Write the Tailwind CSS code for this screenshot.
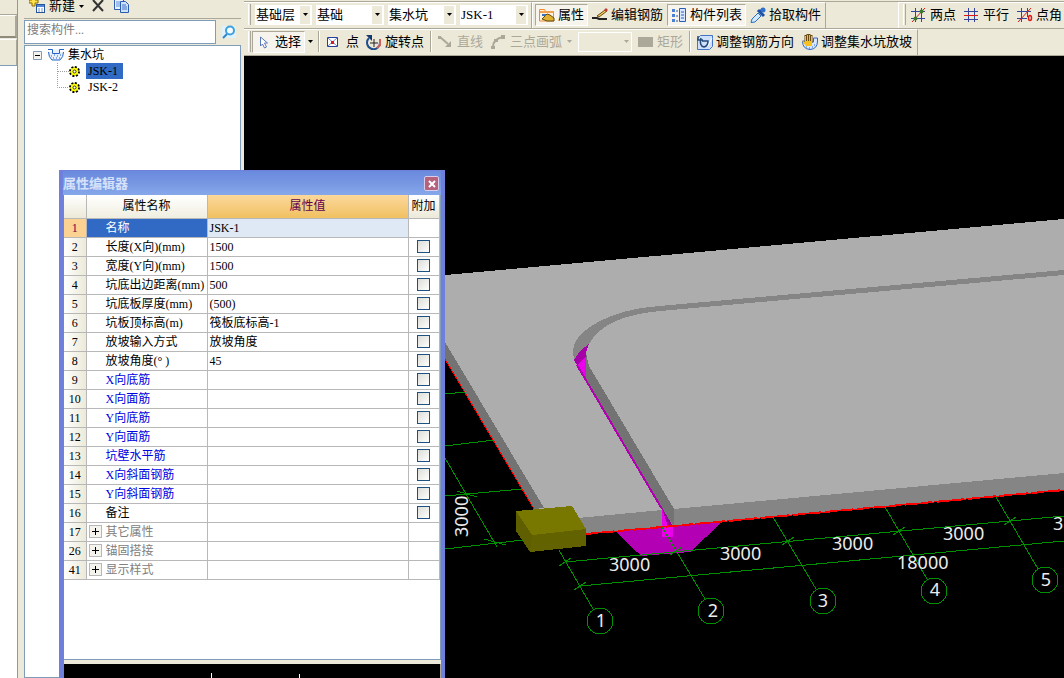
<!DOCTYPE html>
<html lang="zh-CN">
  <head>
    <meta charset="UTF-8" />
    <meta name="viewport" content="width=device-width, initial-scale=1.0" />
    <script src="https://cdn.jsdelivr.net/npm/@tailwindcss/browser@4"></script>
    <title>属性编辑器</title>
  </head>
  <body class="relative flex h-screen overflow-hidden bg-[#ece9d8] font-['Liberation_Serif','Noto_Sans_CJK_SC',serif] text-xs text-black">
    <!-- Edge of the navigation pane -->
    <div class="flex w-[18px] shrink-0 flex-col border-r border-[#7f9db9]">
      <div class="h-[15px] border-b border-[#aca899]"></div>
      <div class="h-[23px] border-t border-r-2 border-b-2 border-t-white border-r-[#aca899] border-b-[#8f8c7e]"></div>
      <div class="mt-px h-[26px] border-t border-r border-t-white border-r-[#aca899]"></div>
      <div class="flex-1 border-t border-[#7f9db9] bg-white"></div>
    </div>

    <!-- Component tree -->
    <aside class="ml-1.5 flex w-[217px] shrink-0 flex-col">
      <div class="flex h-[19px] items-start border-b border-[#aca899] pl-[5px] text-[13px]">
        <button class="flex h-3 items-center gap-1 leading-3">
          <svg class="h-4 w-4" viewBox="0 0 16 16"><path d="M0 2h3V-1h3v3h3v3H6v3H3V5H0z" fill="#ffe14a" stroke="#8a6a00"/><rect x="7.500" y="6.500" width="8" height="8" fill="#fff" stroke="#28549c"/><path d="M8 7h7v2H8z" fill="#4f86dd"/><path d="M9 11h2m1 0h2M9 13h2m1 0h2" stroke="#6a93d6"/></svg>
          <span>新建</span>
          <svg class="h-[3px] w-[5px]" viewBox="0 0 5 3"><path d="M0 0h5L2.500 3z"/></svg>
        </button>
        <button class="ml-2 h-3" aria-label="删除"><svg class="h-3 w-3" viewBox="0 0 12 12"><path d="M1 0l10 11M11 0L1 11" stroke="#333" stroke-width="2"/></svg></button>
        <button class="ml-2.5 h-3" aria-label="复制"><svg class="h-3.5 w-4" viewBox="0 0 16 14"><path d="M.5-2.500h7l2 2v10h-9z" fill="#e8f1ff" stroke="#2c5db0"/><path d="M2 2h4M2 4h4M2 6h4" stroke="#5c8bd8"/><path d="M6.500 1.500h5l3 3v8h-8z" fill="#cfe1fb" stroke="#2c5db0"/><path d="M8 5h4M8 7h5M8 9h5" stroke="#3f73c6"/></svg></button>
      </div>
      <div class="mt-px flex h-6 items-center">
        <input type="text" aria-label="搜索构件" placeholder="搜索构件..." class="h-6 w-[192px] border border-[#7f9db9] bg-white px-0.5 pb-1 placeholder:text-[#7d7d7d] outline-none" />
        <button class="flex flex-1 justify-center" aria-label="搜索"><svg class="h-3.5 w-3.5" viewBox="0 0 14 14"><path d="M0 1h14v12H0z" fill="#dff1fb"/><circle cx="8" cy="5.500" r="4" fill="#f4fcff" stroke="#3fa0dc" stroke-width="2"/><path d="M5 9l-4 4" stroke="#2f86c8" stroke-width="2"/></svg></button>
      </div>
      <div class="mt-px flex-1 border border-[#7f9db9] bg-white pt-px pl-2">
        <div class="flex h-4 items-center">
          <svg class="h-[9px] w-[9px]" viewBox="0 0 9 9"><path d="M.5.5h8v8h-8z" fill="#f5f3ee" stroke="#7f9db9"/><path d="M2 4.500h5" stroke="#000"/></svg>
          <svg class="ml-1.5 h-4 w-4" viewBox="0 0 16 14"><path d="M0 1.500h4.500v4h7v-4H16M.5 4q0 5 3.500 8h8q3.500-3 3.500-8" fill="#e6effc" stroke="#2464c8"/><path d="M3 8h1m2-1h1m2 1h1m2-1h1M5 10h1m2 0h1m2 0h1" stroke="#2464c8"/></svg>
          <span class="ml-1">集水坑</span>
        </div>
        <ul class="ml-6 leading-4">
          <li class="flex items-center">
            <svg class="h-4 w-3" viewBox="0 0 12 16"><path d="M.5 0v16M1 8.500h11" fill="none" stroke="#a0a0a0" stroke-dasharray="1 1"/></svg>
            <svg class="h-[11px] w-[11px]" viewBox="0 0 11 11"><circle cx="5.500" cy="5.500" r="4.500" fill="#ff0" stroke="#000" stroke-width="2" stroke-dasharray="2 1.500"/><circle cx="5.500" cy="5.500" r="3.500" fill="#ff0"/><circle cx="5.500" cy="5.500" r="1.500" fill="#fff" stroke="#333"/></svg>
            <a href="#" class="ml-1.5 bg-[#316ac5] pr-[5px] pl-0.5">JSK-1</a>
          </li>
          <li class="flex items-center">
            <svg class="h-4 w-3" viewBox="0 0 12 16"><path d="M.5 0v8.500H12" fill="none" stroke="#a0a0a0" stroke-dasharray="1 1"/></svg>
            <svg class="h-[11px] w-[11px]" viewBox="0 0 11 11"><circle cx="5.500" cy="5.500" r="4.500" fill="#ff0" stroke="#000" stroke-width="2" stroke-dasharray="2 1.500"/><circle cx="5.500" cy="5.500" r="3.500" fill="#ff0"/><circle cx="5.500" cy="5.500" r="1.500" fill="#fff" stroke="#333"/></svg>
            <a href="#" class="ml-1.5 pr-[5px] pl-0.5">JSK-2</a>
          </li>
        </ul>
      </div>
    </aside>

    <main class="ml-[3px] flex min-w-0 flex-1 flex-col overflow-hidden text-[13px] whitespace-nowrap">
      <!-- Toolbar 1 -->
      <div class="mt-px flex h-7 shrink-0 items-stretch border-t border-b border-t-[#aca899] border-b-[#aca899]">
        <div class="flex shrink-0 items-center gap-1 border-t border-r border-t-white border-r-[#aca899] pr-[3px] pb-0.5">
          <div class="ml-1 h-[21px] w-[3px] border-r border-l border-r-[#aca899] border-l-white"></div>
          <div class="relative h-5 w-[57px]">
            <select aria-label="楼层" class="h-5 w-full appearance-none bg-white pl-px outline-none"><option>基础层</option></select>
            <span class="pointer-events-none absolute top-px right-0.5 flex h-[18px] w-2.5 items-center justify-center bg-[#ece9d8]"><svg class="h-[3px] w-[5px]" viewBox="0 0 5 3"><path d="M0 0h5L2.500 3z"/></svg></span>
          </div>
          <div class="relative h-5 w-[68px]">
            <select aria-label="类型" class="h-5 w-full appearance-none bg-white pl-px outline-none"><option>基础</option></select>
            <span class="pointer-events-none absolute top-px right-0.5 flex h-[18px] w-2.5 items-center justify-center bg-[#ece9d8]"><svg class="h-[3px] w-[5px]" viewBox="0 0 5 3"><path d="M0 0h5L2.500 3z"/></svg></span>
          </div>
          <div class="relative h-5 w-[68px]">
            <select aria-label="构件类型" class="h-5 w-full appearance-none bg-white pl-px outline-none"><option>集水坑</option></select>
            <span class="pointer-events-none absolute top-px right-0.5 flex h-[18px] w-2.5 items-center justify-center bg-[#ece9d8]"><svg class="h-[3px] w-[5px]" viewBox="0 0 5 3"><path d="M0 0h5L2.500 3z"/></svg></span>
          </div>
          <div class="relative h-5 w-[68px]">
            <select aria-label="构件" class="h-5 w-full appearance-none bg-white pl-px outline-none"><option>JSK-1</option></select>
            <span class="pointer-events-none absolute top-px right-0.5 flex h-[18px] w-2.5 items-center justify-center bg-[#ece9d8]"><svg class="h-[3px] w-[5px]" viewBox="0 0 5 3"><path d="M0 0h5L2.500 3z"/></svg></span>
          </div>
        </div>
        <div class="flex shrink-0 items-center border-t border-r border-l border-t-white border-r-[#aca899] border-l-white pb-0.5 pl-0.5">
          <button class="flex h-[22px] items-center gap-[3px] border border-t-[#aca899] border-r-white border-b-white border-l-[#aca899] bg-[#f6f4ec] px-[3px]">
            <svg class="h-4 w-4" viewBox="0 0 16 16"><path d="M.5 14V2.500h5l1 2h8V14z" fill="#fff3df" stroke="#f08a2c"/><path d="M1 5h14" stroke="#f0a050" stroke-width="2"/><path d="M3 12l5-5 3 1 4 3v3H8z" fill="#e0b030" stroke="#604a10"/><path d="M3 8h4" stroke="#3a70c8" stroke-width="2"/></svg>
            属性
          </button>
          <button class="flex h-[22px] items-center gap-[3px] px-1">
            <svg class="h-4 w-4" viewBox="0 0 16 16"><path d="M5 9L13 3l2 1-8 6z" fill="#f2cc58" stroke="#6b4a10"/><path d="M12 3l2-2 2 2-2 2z" fill="#c43a3a"/><path d="M0 11h5l2 1h8" fill="none" stroke="#222" stroke-width="2"/></svg>
            编辑钢筋
          </button>
          <button class="flex h-[22px] items-center gap-[3px] border border-t-[#aca899] border-r-white border-b-white border-l-[#aca899] bg-[#f6f4ec] px-[3px]">
            <svg class="h-4 w-4" viewBox="0 0 16 16"><path d="M1 2h3v3H1zM1 7h3v3H1zM1 12h3v3H1z" fill="#4a7fd4"/><path d="M5 4h2M5 9h2M5 14h2" stroke="#2a4f94"/><path d="M8.500 1.500h6v13h-6z" fill="#d9e8ff" stroke="#2a5db0"/><path d="M10 5h3M10 8h3M10 11h3" stroke="#2a5db0"/></svg>
            构件列表
          </button>
          <button class="flex h-[22px] items-center gap-[3px] px-1">
            <svg class="h-4 w-4" viewBox="0 0 16 16"><path d="M2 12l6-6 3 3-6 6-4 .5z" fill="#cfe8ff" stroke="#2a6fc0"/><path d="M8 3l6 6M9 6l4-4" stroke="#1e4fa0" stroke-width="3"/><circle cx="13" cy="3" r="2.500" fill="#2f6fd0"/></svg>
            拾取构件
          </button>
        </div>
        <div class="ml-[72px] flex flex-1 shrink-0 items-center overflow-hidden border-t border-l border-white pb-0.5">
          <div class="ml-1 h-[21px] w-[3px] border-r border-l border-r-[#aca899] border-l-white"></div>
          <button class="flex h-[22px] shrink-0 items-center gap-[3px] pr-1 pl-[5px]">
            <svg class="h-4 w-4" viewBox="0 0 16 16"><path d="M4.500 1v14M10.500 1v14M0 4.500h14M0 11.500h14" stroke="#34449c"/><path d="M1 15L14 1" stroke="#e01818"/><circle cx="4.500" cy="11.500" r="2" fill="#3d7a28"/><circle cx="10.500" cy="4.500" r="2" fill="#3d7a28"/></svg>
            两点
          </button>
          <button class="flex h-[22px] shrink-0 items-center gap-[3px] px-1">
            <svg class="h-4 w-4" viewBox="0 0 16 16"><path d="M4.500 1v14M10.500 1v14M0 4.500h14M0 12.500h14" stroke="#34449c"/><path d="M0 8.500h14" stroke="#e01818"/></svg>
            平行
          </button>
          <button class="flex h-[22px] shrink-0 items-center gap-[3px] pl-1">
            <svg class="h-4 w-4" viewBox="0 0 16 16"><path d="M4.500 1v14M10.500 1v9M0 4.500h14M0 11.500h10" stroke="#34449c"/><path d="M1 15L14 1" stroke="#e01818"/><ellipse cx="13" cy="11" rx="1.500" ry="2.500" fill="none" stroke="#e01818" stroke-width="1.500"/></svg>
            点角
          </button>
        </div>
      </div>

      <!-- Toolbar 2 -->
      <div class="flex h-[27px] shrink-0 items-stretch border-b border-[#aca899]">
        <div class="flex shrink-0 items-center border-t border-r border-t-white border-r-[#aca899] pr-px pb-0.5">
          <div class="ml-1 h-[21px] w-[3px] border-r border-l border-r-[#aca899] border-l-white"></div>
          <button class="ml-px flex h-[22px] items-center gap-[3px] border border-t-[#aca899] border-r-white border-b-white border-l-[#aca899] bg-[#f6f4ec] px-[3px]">
            <svg class="h-4 w-4" viewBox="0 0 16 16"><path d="M4.500 3v9l2-2 2 4 2-1-2-4h3z" fill="#fff" stroke="#5b78b8"/></svg>
            选择
          </button>
          <button class="flex h-[22px] w-2.5 items-center justify-center" aria-label="选择方式"><svg class="h-[3px] w-[5px]" viewBox="0 0 5 3"><path d="M0 0h5L2.500 3z"/></svg></button>
          <div class="mx-[3px] h-[21px] w-0.5 border-r border-l border-r-white border-l-[#aca899]"></div>
          <button class="flex h-[22px] items-center gap-[3px] px-1">
            <svg class="h-4 w-4" viewBox="0 0 16 16"><path d="M.5 3.500h10v9H.5z" fill="#fff" stroke="#24409c"/><path d="M1 4l9 8M10 4l-9 8" stroke="#7088c8"/><path d="M4 7h3v3H4z" fill="#e01818"/></svg>
            点
          </button>
          <button class="flex h-[22px] items-center gap-[3px] pr-1 pl-[3px]">
            <svg class="h-4 w-4" viewBox="0 0 16 16"><path d="M3 4a6.500 6.500 0 1 0 11 4" fill="none" stroke="#20508c" stroke-width="2"/><path d="M0 1h6v6z" fill="#163a70"/><path d="M4 9h8M8 5v8" stroke="#222"/><path d="M14 5v6l-3 3" fill="none" stroke="#d06060" stroke-width="2"/></svg>
            旋转点
          </button>
          <div class="mx-0.5 h-[21px] w-0.5 border-r border-l border-r-white border-l-[#aca899]"></div>
          <button disabled class="flex h-[22px] items-center gap-[3px] px-1 text-[#aca899]">
            <svg class="h-4 w-4" viewBox="0 0 16 16"><path d="M2 3l8 7" stroke="#aca899" stroke-width="2"/><path d="M0 2h3v3H0zM7 13h6V7z" fill="#aca899"/></svg>
            直线
          </button>
          <button disabled class="flex h-[22px] items-center gap-[3px] pl-1 text-[#aca899]">
            <svg class="h-4 w-4" viewBox="0 0 16 16"><path d="M2 13q0-8 10-10" fill="none" stroke="#aca899" stroke-width="2"/><path d="M0 12h4v3H0zM10 1h4v4h-4zM3 5h4v3H3z" fill="#aca899"/></svg>
            三点画弧
          </button>
          <button disabled class="flex h-[22px] w-3.5 items-center justify-center" aria-label="画弧方式"><svg class="h-[3px] w-[5px]" viewBox="0 0 5 3"><path d="M0 0h5L2.500 3z" fill="#aca899"/></svg></button>
          <div class="relative mx-0.5 h-5 w-[54px]">
            <select disabled aria-label="半径" class="h-5 w-full appearance-none border border-white bg-[#ece9d8] outline-none"></select>
            <svg class="pointer-events-none absolute top-2 right-[3px] h-[3px] w-[5px]" viewBox="0 0 5 3"><path d="M0 0h5L2.500 3z" fill="#aca899"/></svg>
          </div>
          <button disabled class="flex h-[22px] items-center gap-[3px] px-1 text-[#aca899]">
            <svg class="h-4 w-4" viewBox="0 0 16 16"><path d="M0 3h15v10H0z" fill="#aca899"/></svg>
            矩形
          </button>
          <div class="mx-0.5 h-[21px] w-0.5 border-r border-l border-r-white border-l-[#aca899]"></div>
          <button class="flex h-[22px] items-center gap-[3px] px-1">
            <svg class="h-4 w-4" viewBox="0 0 16 16"><path d="M3.500 1.500h12v11l-3 3H.5v-11z" fill="#cfe0fa" stroke="#4474c4"/><path d="M1 2v4h5M4 4q-2 8 3 9 4-1 4-6H5" fill="none" stroke="#24487c" stroke-width="1.500"/><path d="M11 12l4-8" stroke="#fff"/></svg>
            调整钢筋方向
          </button>
          <button class="flex h-[22px] items-center gap-[3px] px-1">
            <svg class="h-4 w-4" viewBox="0 0 16 16"><path d="M.5 7q0 8 7.500 8.500Q15.500 15 15.500 7V4h-4v4z" fill="#d8e8ff" stroke="#2c66c8"/><path d="M4 13h1m2 1h1m2-1h1m1-2h1" stroke="#2c66c8"/><path d="M3.500 9V1M5.500 9V0M7.500 9V0M9.500 9V1" stroke="#6b4a10" stroke-width="2"/><path d="M3 2v6L0 7l4 5h6V2H9v5H8V1H7v6H6V1H5v6H4V2z" fill="#f6c020"/></svg>
            调整集水坑放坡
          </button>
        </div>
      </div>

      <!-- 3D viewport -->
      <div class="min-h-0 flex-1 bg-black">
        <svg class="h-full w-full font-['Noto_Sans',sans-serif] text-lg" viewBox="244 56 820 622" preserveAspectRatio="xMinYMin slice">
          <g shape-rendering="crispEdges">
            <path d="M445 359V275L1064 219V490L586 534L534 509z" fill="#adadad"/>
            <path d="M445 342L544 508L534 509L445 359z" fill="#737373"/>
            <path d="M578 518L662 510L674 509L1064 473V490L586 534z" fill="#858585"/>
            <path d="M1064 270L659 306C610 309 571 332 573 352L574 360L589 344Q604 316 660 311L1064 275z" fill="#858585"/>
            <path d="M586 353L589 366L674 509V526L662 510L586 380z" fill="#737373"/>
            <path d="M589 344L586 353V357L577 365L574 360L580 351z" fill="#a800a8"/>
            <path d="M586 357V381L577 365z" fill="#ea00ea"/>
            <path d="M577 365L662 509" stroke="#b000b0" stroke-width="2"/>
            <path d="M615 531L722 522L690 552L641 556L637 552z" fill="#b400b4"/>
            <path d="M662 508L673 526V537H662z" fill="#ea00ea"/>
            <path d="M662 508L673 526H668L664 514z" fill="#960096"/>
            <path d="M445 359L534 509" stroke="#f00"/>
            <path d="M586 534L1064 490" stroke="#f00" stroke-width="2" stroke-dasharray="12 4"/>
            <path d="M586 534L1064 490" stroke="#f00"/>
            <path d="M516 511L572 506L586 529L532 535z" fill="#787800"/>
            <path d="M516 511L532 535L530 552L516 531z" fill="#5f5f00"/>
            <path d="M532 535L586 529V546L530 552z" fill="#626200"/>
          </g>
          <g fill="none" stroke="#009000" shape-rendering="crispEdges">
            <path d="M445 394L465 392M445 446L494 440M445 496L522 489M445 549L523 540M445 458L497 547"/>
            <path d="M565 562L1064 516M580 586L1064 541"/>
            <path d="M559 550L593 609M662 527L705 599M773 517L816 589M885 507L927 579M996 497L1038 569"/>
            <path d="M559 566L571 558M670 555L682 547M782 545L794 537M893 535L905 527M1004 525L1016 517M574 590L586 582M457 491L477 497M484 539L506 545"/>
            <circle cx="600" cy="621" r="13"/>
            <circle cx="711" cy="611" r="13"/>
            <circle cx="823" cy="601" r="13"/>
            <circle cx="934" cy="591" r="13"/>
            <circle cx="1045" cy="580" r="13"/>
          </g>
          <g fill="#ececec">
            <text x="609" y="571">3000</text>
            <text x="720" y="560">3000</text>
            <text x="832" y="550">3000</text>
            <text x="943" y="540">3000</text>
            <text x="1053" y="530">3</text>
            <text x="897" y="569">18000</text>
            <text transform="translate(468 537) rotate(-90)">3000</text>
            <g text-anchor="middle">
              <text x="601" y="627">1</text>
              <text x="713" y="617">2</text>
              <text x="823" y="607">3</text>
              <text x="935" y="596">4</text>
              <text x="1046" y="586">5</text>
            </g>
          </g>
        </svg>
      </div>
    </main>

    <!-- Property editor window -->
    <section class="absolute top-[170px] bottom-0 left-[59px] flex w-[386px] flex-col border-t border-r-4 border-l-[5px] border-[#6f80dc] bg-[#ece9d8]">
      <header class="-ml-px flex h-6 shrink-0 items-center justify-between bg-linear-to-b from-[#6a8ade] via-[#7796e2] to-[#86a8ea] pt-px pr-0.5">
        <h1 class="text-[13px] font-bold text-[#d6e2fa]">属性编辑器</h1>
        <button aria-label="关闭" class="flex h-[15px] w-[15px] items-center justify-center rounded-xs border border-[#d8cdea] bg-[#b5627e]"><svg class="h-2 w-2" viewBox="0 0 8 8"><path d="M1 1l6 6M7 1L1 7" stroke="#fff" stroke-width="2"/></svg></button>
      </header>
      <div class="min-h-0 flex-1 border-r border-b border-[#7f9db9] bg-white">
        <table class="w-[375px] table-fixed border-collapse leading-[14px]">
          <colgroup><col class="w-[22px]" /><col class="w-[121px]" /><col class="w-[201px]" /><col class="w-[31px]" /></colgroup>
          <thead>
            <tr class="h-[23px]">
              <th class="border-r border-b border-[#b8b8b8] bg-linear-to-b from-white to-[#ece9d8] p-0"></th>
              <th class="border-r border-b border-[#b8b8b8] bg-linear-to-b from-white to-[#f0eee0] p-0 font-normal">属性名称</th>
              <th class="border-r border-b border-[#b8b8b8] bg-linear-to-b from-[#fbd79a] to-[#f0c060] p-0 font-normal text-[#600050]">属性值</th>
              <th class="border-r border-b border-[#b8b8b8] bg-linear-to-b from-white to-[#ece9d8] p-0 font-normal">附加</th>
            </tr>
          </thead>
          <tbody id="props"></tbody>
        </table>
      </div>
      <div class="h-1 shrink-0"></div>
      <div class="flex h-3.5 shrink-0 items-end border-r border-[#aca899] bg-black">
        <div class="ml-[147px] h-[5px] w-px bg-white"></div>
        <div class="ml-[87px] h-1 w-px bg-white"></div>
      </div>
    </section>

    <script>
      // [row number, name, value, kind]
      const rows = [
        [1, "名称", "JSK-1", "selected"],
        [2, "长度(X向)(mm)", "1500", "plain"],
        [3, "宽度(Y向)(mm)", "1500", "plain"],
        [4, "坑底出边距离(mm)", "500", "plain"],
        [5, "坑底板厚度(mm)", "(500)", "plain"],
        [6, "坑板顶标高(m)", "筏板底标高-1", "plain"],
        [7, "放坡输入方式", "放坡角度", "plain"],
        [8, "放坡角度(° )", "45", "plain"],
        [9, "X向底筋", "", "rebar"],
        [10, "X向面筋", "", "rebar"],
        [11, "Y向底筋", "", "rebar"],
        [12, "Y向面筋", "", "rebar"],
        [13, "坑壁水平筋", "", "rebar"],
        [14, "X向斜面钢筋", "", "rebar"],
        [15, "Y向斜面钢筋", "", "rebar"],
        [16, "备注", "", "plain"],
        [17, "其它属性", "", "group"],
        [26, "锚固搭接", "", "group"],
        [41, "显示样式", "", "group"],
      ];

      const nameStyle = {
        selected: "bg-[#316ac5] text-white",
        plain: "",
        rebar: "text-[#0000e0]",
        group: "text-[#808080]",
      };

      const expander = `<button aria-label="展开" class="ml-0.5 flex h-[13px] w-[13px] items-center justify-center border border-[#b8b8b8] bg-[#f4f3ee]"><svg class="h-[7px] w-[7px]" viewBox="0 0 7 7"><path d="M0 3.500h7M3.500 0v7" stroke="#000"/></svg></button>`;

      document.getElementById("props").innerHTML = rows.map(([no, name, value, kind]) => `
        <tr class="h-[19px]">
          <td class="border-r border-b border-[#b8b8b8] p-0 text-center ${kind === "selected" ? "bg-[#fcd292] text-[#600050]" : "bg-linear-to-r from-white to-[#ece9d8]"}">${no}</td>
          <td class="border-r border-b border-[#b8b8b8] p-0 whitespace-nowrap ${nameStyle[kind]}">
            <div class="flex items-center"><div class="w-[19px] shrink-0">${kind === "group" ? expander : ""}</div>${name}</div>
          </td>
          <td class="border-r border-b border-[#b8b8b8] p-0 pl-0.5 ${kind === "selected" ? "bg-[#dfe9f6]" : ""}">${value}</td>
          <td class="border-r border-b border-[#b8b8b8] p-0">
            ${kind === "plain" || kind === "rebar" ? `<input type="checkbox" aria-label="${name} 附加" class="mx-auto block h-[13px] w-[13px] appearance-none border border-[#1c5180] bg-linear-to-br from-[#dcdcd7] to-white" />` : ""}
          </td>
        </tr>`).join("");
    </script>
  </body>
</html>
